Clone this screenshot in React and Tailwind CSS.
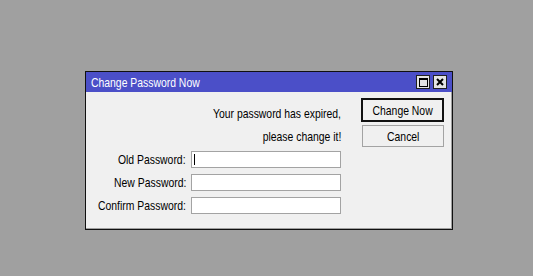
import React from 'react';

const font = { fontFamily: '"Liberation Sans", Arial, sans-serif' };

// reference text is a narrow face; squeeze Liberation Sans horizontally
const Narrow = ({ children, origin = 'origin-right' }) => (
  <span className={`inline-block whitespace-nowrap scale-x-[0.8] ${origin}`}>{children}</span>
);

const TitleButton = ({ children }) => (
  <div className="w-[14px] h-[14px] bg-[#e4e4e4] border border-[#202020] flex items-center justify-center">
    {children}
  </div>
);

const Field = ({ label, focused }) => (
  <div className="flex items-center justify-end gap-[5px] h-[17px]">
    <span className="text-[13px] leading-none text-black">
      <Narrow>{label}</Narrow>
    </span>
    <div className="relative shrink-0 w-[150px] h-[17px] bg-white border border-[#a3a3a3]">
      {focused && <span className="absolute left-[2px] top-[2px] w-px h-[11px] bg-black" />}
    </div>
  </div>
);

export default function App() {
  return (
    <div className="w-[533px] h-[276px] bg-[#a0a0a0] pl-[85px] pt-[71px]" style={font}>
      <div className="w-[368px] h-[159px] border border-[#101010] bg-[#f0f0f0] flex flex-col">
        {/* Title bar */}
        <div className="h-[20px] bg-[#4b4fc8] flex items-center justify-between pl-[5px] pr-[5px]">
          <span className="text-white text-[13px] leading-none">
            <Narrow origin="origin-left">Change Password Now</Narrow>
          </span>
          <div className="flex gap-[3px]">
            <TitleButton>
              <div className="w-[9px] h-[9px] border border-black border-t-2" />
            </TitleButton>
            <TitleButton>
              <svg width="8" height="8" viewBox="0 0 8 8">
                <path d="M1 1L7 7M7 1L1 7" stroke="#000" strokeWidth="2" />
              </svg>
            </TitleButton>
          </div>
        </div>

        {/* Body */}
        <div className="flex-1 flex border-r border-b border-[#a0a0a0]">
          <div className="w-[255px] pt-[10px] flex flex-col">
            <div className="h-[23px] leading-[23px] text-right text-[13px] text-black">
              <Narrow>Your password has expired,</Narrow>
            </div>
            <div className="h-[23px] leading-[23px] text-right text-[13px] text-black">
              <Narrow>please change it!</Narrow>
            </div>
            <div className="mt-[3px] flex flex-col gap-[6px]">
              <Field label="Old Password:" focused />
              <Field label="New Password:" />
              <Field label="Confirm Password:" />
            </div>
          </div>
          <div className="ml-[20px] pt-[6px] w-[83px] flex flex-col">
            <button className="w-[83px] h-[24px] border-2 border-[#111] bg-[#f0f0f0] text-[13px] text-black leading-none">
              <Narrow origin="origin-center">Change Now</Narrow>
            </button>
            <button className="ml-[1px] mt-[3px] w-[82px] h-[22px] border border-[#a3a3a3] bg-[#f0f0f0] text-[13px] text-black leading-none">
              <Narrow origin="origin-center">Cancel</Narrow>
            </button>
          </div>
        </div>
      </div>
    </div>
  );
}
